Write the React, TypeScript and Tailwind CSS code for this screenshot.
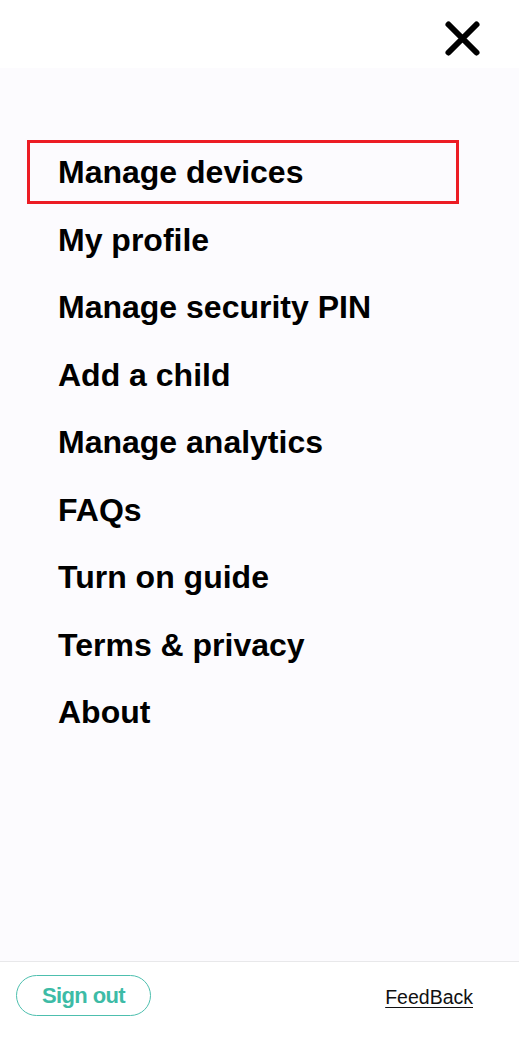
const menuItems = [
    'Manage devices',
    'My profile',
    'Manage security PIN',
    'Add a child',
    'Manage analytics',
    'FAQs',
    'Turn on guide',
    'Terms & privacy',
    'About',
];

export default function App() {
    return (
        <div className="h-screen flex flex-col bg-white text-black font-['Liberation_Sans',Arial,sans-serif]">
            <header className="h-[68px] shrink-0 bg-white flex items-start justify-end pr-[38px] pt-[20px]">
                <button aria-label="Close" className="w-[38px] h-[38px] flex items-center justify-center">
                    <svg width="38" height="38" viewBox="0 0 38 38" fill="none">
                        <path d="M5.5 4.5 L33.5 32.5 M33.5 4.5 L5.5 32.5" stroke="#000" strokeWidth="6" strokeLinecap="round" />
                    </svg>
                </button>
            </header>

            <main className="flex-1 bg-[#fcfbfe] pt-[72px]">
                <ul className="flex flex-col gap-[3.5px]">
                    {menuItems.map((item, i) => (
                        <li
                            key={item}
                            className={`ml-[27px] w-[432px] h-16 flex items-center pl-[28px] border-[3px] ${i === 0 ? 'border-[#ec1c24]' : 'border-transparent'}`}
                        >
                            <span className="text-[32px] font-bold leading-none">{item}</span>
                        </li>
                    ))}
                </ul>
            </main>

            <footer className="h-[80px] shrink-0 bg-white border-t border-[#e8e8ea] flex items-start justify-between pt-[13px] pl-[16px] pr-[46px]">
                <button className="w-[135px] h-[41px] rounded-full border-[1.5px] border-[#4dbfae] text-[#3dbba6] text-[22px] font-bold tracking-[-0.6px] flex items-center justify-center">
                    Sign out
                </button>
                <a href="#" className="mt-[8px] text-[19.5px] text-[#111] underline underline-offset-[3px] decoration-1">
                    FeedBack
                </a>
            </footer>
        </div>
    );
}
